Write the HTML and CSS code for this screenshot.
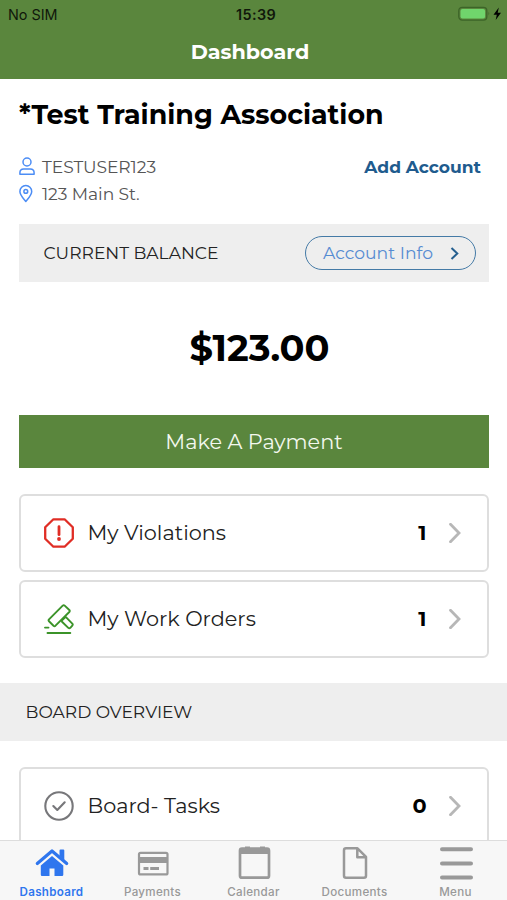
FILE: index.html
```html
<!DOCTYPE html>
<html lang="en">
<head>
<meta charset="utf-8">
<title>Dashboard</title>
<link rel="stylesheet" href="styles.css">
</head>
<body>
<div class="app">
  <header class="header">
    <div class="status">
      <span class="carrier">No SIM</span>
      <span class="time">15:39</span>
      <svg class="battery" width="46" height="16" viewBox="0 0 46 16"><rect x=".8" y="1.3" width="28" height="12.8" rx="3.4" fill="none" stroke="#3c6428" stroke-width="1.3"/><rect x="2.5" y="3" width="24.6" height="9.4" rx="2" fill="#70d56c"/><path d="M30.5 5.8q1.5 1.8 0 3.6z" fill="#3c6428"/><path d="M40.8 1.5 35.500 8.700h3.300l-1.100 5.300L43 6.800h-3.300z" fill="#000"/></svg>
    </div>
    <h1 class="page-title"><span>Dashboard</span></h1>
  </header>
  <main class="content">
    <h2 class="association"><span>*Test Training Association</span></h2>
    <div class="account">
      <div>
        <div class="detail">
          <svg width="16" height="20" viewBox="0 0 16 20" fill="none" stroke="#4c8df5" stroke-width="1.5"><circle cx="8" cy="5" r="4"/><path d="M.9 17.300v-1.600q0-3.800 3.800-3.800h6.600q3.800 0 3.800 3.800v1.600z" stroke-linejoin="round"/></svg>
          <span>TESTUSER123</span>
        </div>
        <div class="detail">
          <svg width="16" height="20" viewBox="0 0 16 20" fill="none" stroke="#4c8df5" stroke-width="1.5"><path d="M6.800 17.500C4 14 .9 11 .9 7.500a5.900 5.900 0 0 1 11.800 0c0 3.500-3.100 6.500-5.900 10z" stroke-linejoin="round"/><circle cx="6.800" cy="7.400" r="1.900"/></svg>
          <span>123 Main St.</span>
        </div>
      </div>
      <a class="add">Add Account</a>
    </div>
    <div class="balance">
      <span class="raised">CURRENT BALANCE</span>
      <a class="info"><span class="raised">Account Info</span><svg width="10" height="14" viewBox="0 0 10 14" fill="none" stroke="#255f8f" stroke-width="2"><path d="m1.500 2 5.800 5.500-5.800 5.500"/></svg></a>
    </div>
    <div class="amount"><span>$123.00</span></div>
    <a class="pay"><span>Make A Payment</span></a>
    <div class="card">
      <svg class="card-icon" width="30" height="32" viewBox="0 0 30 32" fill="none" stroke="#e02d25" stroke-width="2.300"><path d="M9.400 2.300h11.200l8.200 8v11.400l-8.200 8H9.400l-8.200-8V10.300z" stroke-linejoin="round"/><path d="M15 9.700v8" stroke-width="2.800" stroke-linecap="round"/><circle cx="15" cy="22" r="1.900" fill="#e02d25" stroke="none"/></svg>
      <span class="card-text raised">My Violations</span><b class="count raised">1</b>
      <svg class="chevron" width="12" height="20" viewBox="0 0 12 20"><path d="m1.500 1.300 8.500 8.700-8.500 8.700"/></svg>
    </div>
    <div class="card">
      <svg class="card-icon" width="30" height="32" viewBox="0 0 30 32" fill="none" stroke="#3b9329" stroke-width="1.900" stroke-linecap="round" stroke-linejoin="round"><path d="M5 16.300 18.700 2.600q1-.9 2 0l4.600 4.400q.9 1 0 2L11.500 22.700q-1 .9-2 0L5 18.300q-.9-1 0-2zM18.300 17l3.400-3.200 6.600 6.800q.9 1 0 2l-2 2.300q-1 .9-2 0L18 18.800M1 24.600h3.500M3.500 30h22.800"/></svg>
      <span class="card-text raised">My Work Orders</span><b class="count raised">1</b>
      <svg class="chevron" width="12" height="20" viewBox="0 0 12 20"><path d="m1.500 1.300 8.500 8.700-8.500 8.700"/></svg>
    </div>
    <div class="section"><span>BOARD OVERVIEW</span></div>
    <div class="card">
      <svg class="card-icon" width="30" height="32" viewBox="0 0 30 32" fill="none" stroke="#77777a" stroke-width="2.100"><circle cx="15" cy="16" r="13.700"/><path d="m9.300 16 4 4 7.400-7.700" stroke-linecap="round" stroke-linejoin="round"/></svg>
      <span class="card-text raised">Board- Tasks</span><b class="count raised">0</b>
      <svg class="chevron" width="12" height="20" viewBox="0 0 12 20"><path d="m1.500 1.300 8.500 8.700-8.500 8.700"/></svg>
    </div>
  </main>
  <nav class="tabs">
    <a class="tab active"><svg width="34" height="36" viewBox="0 0 34 36"><path d="M2.300 18.500 17 6l14.700 12.500" fill="none" stroke="#2f76ee" stroke-width="3.200" stroke-linecap="round" stroke-linejoin="round"/><path d="M24.500 5.500q0-1 1-1h2.800q1 0 1 1v9.500l-4.800-4zM17 11l11.300 9.500v9.300q0 1.200-1.200 1.200H19.500v-7.500h-5V31H7q-1.200 0-1.200-1.200v-9.300z" fill="#2f76ee"/></svg><span>Dashboard</span></a>
    <a class="tab"><svg width="34" height="36" viewBox="0 0 34 36"><rect x="3" y="7.800" width="28.500" height="21.600" rx="1.500" fill="none" stroke="#999" stroke-width="2.200"/><path fill="#999" d="M3 12h28v6H3zM7.500 22h5v3h-5zM14.200 22H23v3h-8.800z"/></svg><span>Payments</span></a>
    <a class="tab"><svg width="34" height="36" viewBox="0 0 34 36"><rect x="3" y="3.700" width="29" height="29" rx="2" fill="none" stroke="#999" stroke-width="2.700"/><path fill="#999" d="M3 3.500h29V9H3zM8 1.500h5v3H8zM23 1.500h5v3h-5z"/></svg><span>Calendar</span></a>
    <a class="tab"><svg width="34" height="36" viewBox="0 0 34 36" fill="none" stroke="#999" stroke-width="2.500" stroke-linejoin="round"><path d="M8 3.300h11.500l8.500 8.500v19q0 2-2 2H8q-2 0-2-2v-25.500q0-2 2-2zM19.300 3.500v8.700H28"/></svg><span>Documents</span></a>
    <a class="tab"><svg width="34" height="36" viewBox="0 0 34 36" stroke="#999" stroke-width="4" stroke-linecap="round"><path d="M3 4.200h29M3 18.400h29M3 32.600h29"/></svg><span>Menu</span></a>
  </nav>
</div>
</body>
</html>
```
FILE: styles.css
```css
* { box-sizing: border-box; }
body { margin: 0; font-family: Montserrat, Inter, sans-serif; color: #000; background: #fff; }
.app { height: 900px; display: flex; flex-direction: column; overflow: hidden; }
svg { display: block; flex: none; }
span, b, a { white-space: nowrap; }
.raised { padding-bottom: 2px; }
.header { height: 79px; flex: none; background: #5a863d; }
.status { height: 28px; display: grid; grid-template-columns: 1fr auto 1fr; align-items: center; padding: 0 3px 0 8px; font-family: Inter, sans-serif; font-size: 14.4px; color: #10180b; }
.time { font-weight: 600; letter-spacing: .4px; }
.battery { justify-self: end; margin-top: -1px; }
.page-title { margin: 0; height: 47px; display: flex; justify-content: center; align-items: center; padding-right: 7px; font-size: 20.7px; font-weight: 700; color: #fff; }
.content { flex: 1; min-height: 0; overflow: hidden; padding: 0 18px 0 19px; }
.association { margin: 0; height: 74px; padding-top: 19px; line-height: 34px; font-size: 26.9px; font-weight: 700; }
.account { height: 71px; display: flex; justify-content: space-between; padding-right: 8px; }
.detail { height: 27px; display: flex; align-items: center; gap: 7px; font-size: 17.1px; letter-spacing: -.05px; color: #555; }
.add { line-height: 27px; font-size: 17.1px; font-weight: 700; color: #205b8e; }
.balance { height: 58px; background: #eee; display: flex; align-items: center; justify-content: space-between; padding: 0 13px 0 24.5px; font-size: 17.1px; color: #222; }
.info { width: 171px; height: 34px; border: 1.5px solid #447aa6; border-radius: 17px; display: flex; align-items: center; justify-content: space-between; padding: 0 15px 0 17px; color: #568bd2; font-size: 17.2px; }
.amount { height: 133px; line-height: 131px; text-align: center; padding-left: 11px; font-size: 36.8px; font-weight: 700; }
.pay { height: 53px; line-height: 53px; display: block; background: #5a863d; color: #f3f8ee; text-align: center; font-size: 20.8px; margin-bottom: 26px; }
.card { height: 78px; margin-bottom: 8px; border: 2px solid #dedede; border-radius: 6px; display: flex; align-items: center; padding: 0 26px 0 23px; }
.card-text { margin-left: 13.5px; font-size: 20.8px; color: #222; }
.count { margin-left: auto; margin-right: 22.5px; font-size: 20.8px; font-weight: 700; }
.chevron { fill: none; stroke: #b7b7b7; stroke-width: 2.8; stroke-linecap: round; }
.section { height: 58px; line-height: 58px; margin: 25px -18px 26px -19px; padding-left: 25.5px; background: #eee; font-size: 17.1px; color: #222; }
.tabs { height: 60px; flex: none; display: grid; grid-template-columns: repeat(5, 101px); padding-left: 1px; border-top: 1px solid #ddd; background: #f7f7f7; }
.tab { display: flex; flex-direction: column; align-items: center; padding-top: 4px; font-family: Inter, sans-serif; font-size: 11.6px; letter-spacing: .3px; font-weight: 500; line-height: 22px; color: #999; }
.active { color: #2f76ee; font-weight: 600; }
```
